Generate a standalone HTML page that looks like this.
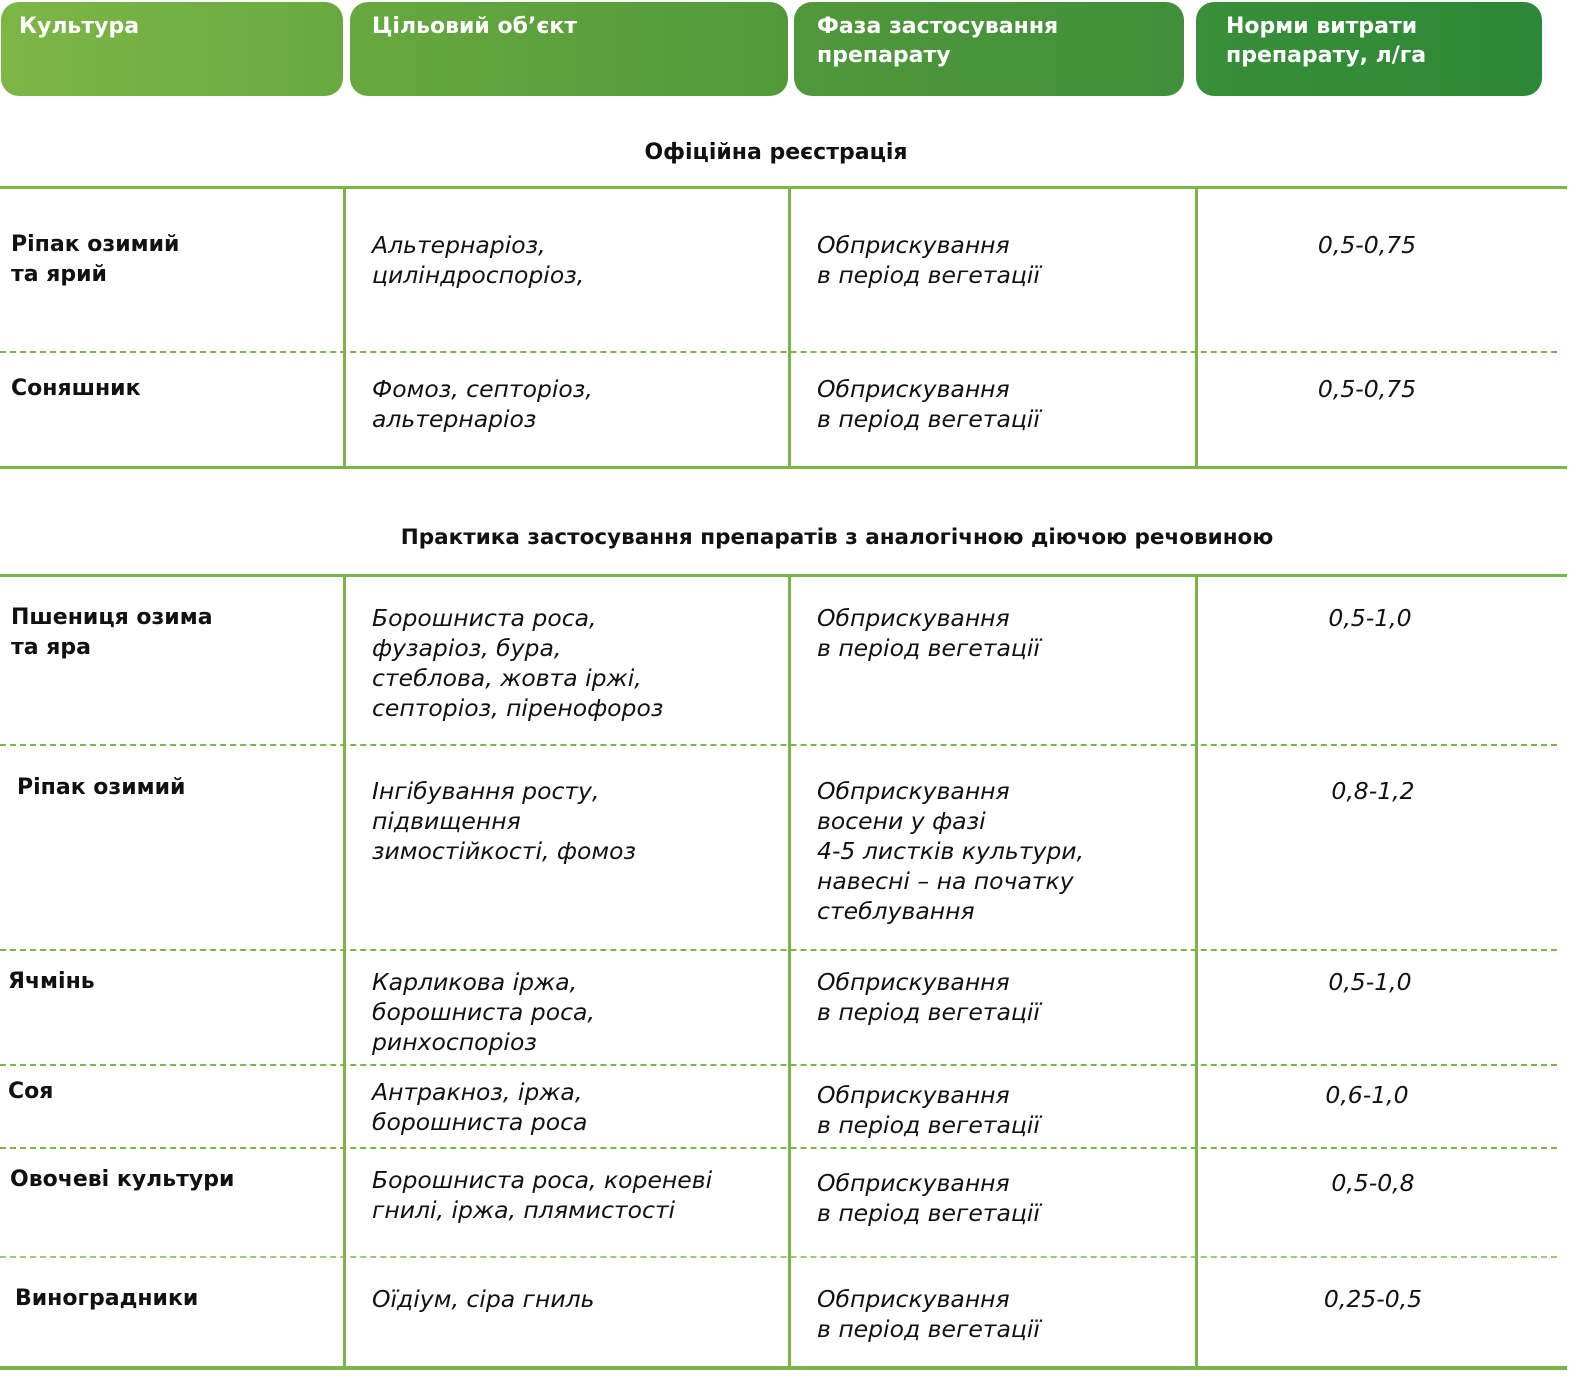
<!DOCTYPE html>
<html><head><meta charset="utf-8"><style>
*{margin:0;padding:0;box-sizing:border-box}
body{width:1577px;height:1376px;background:#fff;position:relative;overflow:hidden;font-family:"DejaVu Sans","Liberation Sans",sans-serif;color:#111}
.hd{position:absolute;top:2px;height:94px;border-radius:18px;color:#fff;font-size:22px;font-weight:bold;line-height:29px;padding-top:10px}
.t{position:absolute;font-size:23.5px;line-height:30px;white-space:nowrap}
.b{font-weight:bold;font-size:22px}
.i{font-style:italic}
.c{text-align:center;width:200px}
.sl{position:absolute;left:0;width:1567px;height:3px;background:#79b646}
.dl{position:absolute;left:0;width:1557px;height:0;border-top:2px dashed #79b646}
.vl{position:absolute;width:3px;background:#79b646}
</style></head><body>
<div style="position:absolute;left:0;top:0;width:1545px;height:100px;overflow:hidden">
<div class="hd" style="left:1px;width:342px;padding-left:18px;background:linear-gradient(90deg,#7db646,#68aa40)">Культура</div>
<div class="hd" style="left:350px;width:438px;padding-left:22px;background:linear-gradient(90deg,#67a93f,#52993b)">Цільовий об’єкт</div>
<div class="hd" style="left:794px;width:390px;padding-left:23px;background:linear-gradient(90deg,#51983b,#3f9039)">Фаза застосування<br>препарату</div>
<div class="hd" style="left:1196px;width:346px;padding-left:30px;background:linear-gradient(90deg,#3a8f38,#2b8836)">Норми витрати<br>препарату, л/га</div>
</div>

<div class="t b" style="left:0;width:1552px;text-align:center;top:138px">Офіційна реєстрація</div>
<div class="t b" style="left:0;width:1674px;text-align:center;top:523px;font-size:21.5px">Практика застосування препаратів з аналогічною діючою речовиною</div>

<div class="sl" style="top:186px"></div>
<div class="sl" style="top:466px"></div>
<div class="sl" style="top:574px"></div>
<div class="sl" style="top:1366px;height:4px"></div>
<div class="dl" style="top:351px"></div>
<div class="dl" style="top:744px"></div>
<div class="dl" style="top:949px"></div>
<div class="dl" style="top:1064px"></div>
<div class="dl" style="top:1147px"></div>
<div class="dl" style="top:1256px;border-top-color:#9cc878"></div>

<div class="vl" style="left:343px;top:187px;height:281px"></div>
<div class="vl" style="left:788px;top:187px;height:281px"></div>
<div class="vl" style="left:1195px;top:187px;height:281px"></div>
<div class="vl" style="left:343px;top:575px;height:792px"></div>
<div class="vl" style="left:788px;top:575px;height:792px"></div>
<div class="vl" style="left:1195px;top:575px;height:792px"></div>

<div class="t b" style="left:11px;top:230px">Ріпак озимий<br>та ярий</div>
<div class="t i" style="left:372px;top:230px">Альтернаріоз,<br>циліндроспоріоз,</div>
<div class="t i" style="left:817px;top:230px">Обприскування<br>в період вегетації</div>
<div class="t i c" style="left:1267px;top:230px">0,5-0,75</div>

<div class="t b" style="left:11px;top:374px">Соняшник</div>
<div class="t i" style="left:372px;top:374px">Фомоз, септоріоз,<br>альтернаріоз</div>
<div class="t i" style="left:817px;top:374px">Обприскування<br>в період вегетації</div>
<div class="t i c" style="left:1267px;top:374px">0,5-0,75</div>

<div class="t b" style="left:11px;top:603px">Пшениця озима<br>та яра</div>
<div class="t i" style="left:372px;top:603px">Борошниста роса,<br>фузаріоз, бура,<br>стеблова, жовта іржі,<br>септоріоз, піренофороз</div>
<div class="t i" style="left:817px;top:603px">Обприскування<br>в період вегетації</div>
<div class="t i c" style="left:1270px;top:603px">0,5-1,0</div>

<div class="t b" style="left:17px;top:773px">Ріпак озимий</div>
<div class="t i" style="left:372px;top:776px">Інгібування росту,<br>підвищення<br>зимостійкості, фомоз</div>
<div class="t i" style="left:817px;top:776px">Обприскування<br>восени у фазі<br>4-5 листків культури,<br>навесні – на початку<br>стеблування</div>
<div class="t i c" style="left:1273px;top:776px">0,8-1,2</div>

<div class="t b" style="left:8px;top:967px">Ячмінь</div>
<div class="t i" style="left:372px;top:967px">Карликова іржа,<br>борошниста роса,<br>ринхоспоріоз</div>
<div class="t i" style="left:817px;top:967px">Обприскування<br>в період вегетації</div>
<div class="t i c" style="left:1270px;top:967px">0,5-1,0</div>

<div class="t b" style="left:8px;top:1077px">Соя</div>
<div class="t i" style="left:372px;top:1077px">Антракноз, іржа,<br>борошниста роса</div>
<div class="t i" style="left:817px;top:1080px">Обприскування<br>в період вегетації</div>
<div class="t i c" style="left:1267px;top:1080px">0,6-1,0</div>

<div class="t b" style="left:10px;top:1165px">Овочеві культури</div>
<div class="t i" style="left:372px;top:1165px">Борошниста роса, кореневі<br>гнилі, іржа, плямистості</div>
<div class="t i" style="left:817px;top:1168px">Обприскування<br>в період вегетації</div>
<div class="t i c" style="left:1273px;top:1168px">0,5-0,8</div>

<div class="t b" style="left:15px;top:1284px">Виноградники</div>
<div class="t i" style="left:372px;top:1284px">Оїдіум, сіра гниль</div>
<div class="t i" style="left:817px;top:1284px">Обприскування<br>в період вегетації</div>
<div class="t i c" style="left:1273px;top:1284px">0,25-0,5</div>
</body></html>
